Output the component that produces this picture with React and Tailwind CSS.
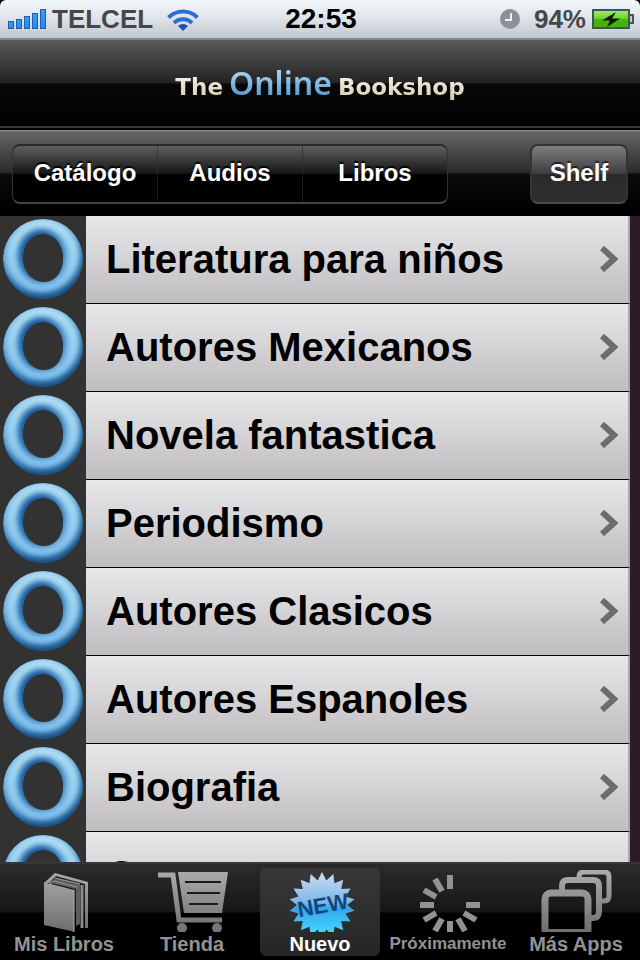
import React, { useId, useState } from 'react';

const CATEGORIES = [
    'Literatura para niños',
    'Autores Mexicanos',
    'Novela fantastica',
    'Periodismo',
    'Autores Clasicos',
    'Autores Espanoles',
    'Biografia',
    'Cuentos'
];

const SEGMENTS = ['Catálogo', 'Audios', 'Libros'];

// Starburst outline, alternating between the outer and inner radius
const burstPoints = (cx, cy, outer, inner, count) =>
    Array.from({ length: count * 2 }, (_, i) => {
        const r = i % 2 === 0 ? outer : inner;
        const a = (Math.PI * i) / count - Math.PI / 2;
        return `${(cx + r * Math.cos(a)).toFixed(1)},${(cy + r * Math.sin(a)).toFixed(1)}`;
    }).join(' ');

const SignalIcon = () => (
    <svg width="38" height="20" viewBox="0 0 38 20">
        <defs>
            <linearGradient id="signal" x1="0" y1="0" x2="0" y2="1">
                <stop offset="0" stopColor="#3f9af0" />
                <stop offset="1" stopColor="#1f8af0" />
            </linearGradient>
        </defs>
        {[7, 9, 12, 15, 19].map((h, i) => (
            <rect key={h} x={0.5 + i * 8} y={19.5 - h} width="5" height={h} fill="url(#signal)" stroke="#1b5fae" />
        ))}
    </svg>
);

const WifiIcon = () => (
    <svg width="32" height="23" viewBox="0 0 32 23" fill="none" stroke="#2a6fd6" strokeWidth="4">
        <path d="M1.500 9.500a20.500 20.500 0 0 1 29 0" />
        <path d="M7 15a12.700 12.700 0 0 1 18 0" />
        <path d="M16 23l-5-5a7 7 0 0 1 10 0z" fill="#1c50b8" stroke="none" />
    </svg>
);

const ClockIcon = () => (
    <svg width="20" height="20" viewBox="0 0 20 20">
        <circle cx="10" cy="10" r="10" fill="#8b9295" />
        <path d="M11 4v7H5" fill="none" stroke="#eef2f4" strokeWidth="2" />
    </svg>
);

const BatteryIcon = () => (
    <svg width="42" height="20" viewBox="0 0 42 20">
        <defs>
            <linearGradient id="charge" x1="0" y1="0" x2="0" y2="1">
                <stop offset="0" stopColor="#a4ec6c" />
                <stop offset="0.45" stopColor="#6fd632" />
                <stop offset="0.55" stopColor="#3fb60a" />
                <stop offset="1" stopColor="#4cab1a" />
            </linearGradient>
        </defs>
        <rect x="1" y="1" width="36" height="18" fill="url(#charge)" stroke="#3f5552" strokeWidth="2" />
        <path d="M38 6h3v8h-3" fill="#c4ccd2" stroke="#4a5459" strokeWidth="2" />
        <path d="M24 3L10 11.500h8L15 18l13-8.500h-8z" fill="#10160c" />
    </svg>
);

const RingIcon = () => {
    const id = useId();
    const ring = 'M40 0A40 40 0 1 1 40 80A40 40 0 1 1 40 0ZM40 15C28 15 20 26 20 39S29 63 41 63 60 52 60 39 52 15 40 15Z';
    return (
        <svg width="80" height="80" viewBox="0 0 80 80" aria-hidden="true">
            <defs>
                <linearGradient id={`${id}f`} x1="0" y1="0" x2="0" y2="1">
                    <stop offset="0" stopColor="#7ab6dd" />
                    <stop offset="0.5" stopColor="#6fb2e0" />
                    <stop offset="1" stopColor="#3f86c0" />
                </linearGradient>
                <linearGradient id={`${id}l`} x1="0" y1="0" x2="0" y2="1">
                    <stop offset="0" stopColor="#b4e0f6" />
                    <stop offset="1" stopColor="#86c6ef" />
                </linearGradient>
                <clipPath id={`${id}c`}><path d={ring} clipRule="evenodd" /></clipPath>
                <filter id={`${id}b`} x="-30%" y="-30%" width="160%" height="160%">
                    <feGaussianBlur stdDeviation="3" />
                </filter>
            </defs>
            <g clipPath={`url(#${id}c)`}>
                <path d={ring} fill={`url(#${id}f)`} fillRule="evenodd" />
                <ellipse cx="40" cy="37" rx="31" ry="32" fill="none" stroke={`url(#${id}l)`} strokeWidth="10" filter={`url(#${id}b)`} />
                <ellipse cx="38" cy="36" rx="22" ry="25" fill="#0f4f94" filter={`url(#${id}b)`} />
                <circle cx="38" cy="35" r="45" fill="none" stroke="#0e4378" strokeWidth="8" filter={`url(#${id}b)`} />
            </g>
        </svg>
    );
};

const TabGradient = () => (
    <svg width="0" height="0" className="absolute" aria-hidden="true">
        <defs>
            <linearGradient id="tab" gradientUnits="userSpaceOnUse" x1="0" y1="0" x2="0" y2="64">
                <stop offset="0" stopColor="#aeadae" />
                <stop offset="1" stopColor="#6c6b6c" />
            </linearGradient>
            <linearGradient id="burst" gradientUnits="userSpaceOnUse" x1="0" y1="0" x2="0" y2="64">
                <stop offset="0" stopColor="#d4dff3" />
                <stop offset="0.5" stopColor="#7db8ea" />
                <stop offset="0.6" stopColor="#35a5ec" />
                <stop offset="1" stopColor="#45d8ff" />
            </linearGradient>
        </defs>
    </svg>
);

const BookIcon = () => (
    <svg width="72" height="62" viewBox="0 0 72 62">
        <path d="M16 13L27 3l33 9v46h-3V14L28 6l-7 7z" fill="url(#tab)" />
        <path d="M27 8l25 6v40l-4 2V19L23 13z" fill="#5f5e5f" />
        <path d="M25 11l24 6M27 8l25 6" stroke="#9b9a9b" strokeWidth="1" />
        <path d="M16 12l5 2 4-4-2 4 23 6v42l-3-1-27-6z" fill="url(#tab)" />
        <path d="M46 20v42" stroke="#b5b4b5" strokeWidth="1" />
        <path d="M54 15v43" stroke="#8a898a" strokeWidth="3" />
    </svg>
);

const CartIcon = () => (
    <svg width="72" height="62" viewBox="0 0 72 62">
        <path d="M2 5h15l6 45h43" fill="none" stroke="url(#tab)" strokeWidth="5" />
        <path d="M22 2h50l-6 41H28z" fill="url(#tab)" />
        <path d="M29 12h36M31 23h33M33 34h29" stroke="#1b1a1b" strokeWidth="2" />
        <circle cx="26" cy="58" r="5" fill="#777677" />
        <circle cx="61" cy="58" r="5" fill="#777677" />
    </svg>
);

const NewIcon = () => (
    <svg width="72" height="62" viewBox="0 0 72 62">
        <polygon points={burstPoints(38, 35, 33, 25, 18)} fill="url(#burst)" />
        <text
            x="39"
            y="43"
            textAnchor="middle"
            transform="rotate(-10 38 36)"
            fill="#10467c"
            fontFamily="Liberation Sans, sans-serif"
            fontWeight="700"
            fontSize="22"
        >
            NEW
        </text>
    </svg>
);

const SpinnerIcon = () => (
    <svg width="72" height="62" viewBox="0 0 72 62">
        {/* the spokes at one and two o'clock are left out */}
        {[0, 90, 120, 150, 180, 210, 240, 270, 300, 330].map(a => (
            <rect key={a} x="35" y="5" width="6" height="14" fill="#939293" transform={`rotate(${a} 38 35)`} />
        ))}
    </svg>
);

const AppsIcon = () => (
    <svg width="72" height="62" viewBox="0 0 72 62" fill="none" stroke="url(#tab)">
        <path d="M39 9V7q0-5 5-5h20q5 0 5 5v19q0 5-5 5h-2" strokeWidth="5" />
        <path d="M22 21v-5q0-6 6-6h25q6 0 6 6v25q0 7-6 7h-2" strokeWidth="6" />
        <rect x="5" y="23" width="43" height="43" rx="6" strokeWidth="7" />
        <path d="M2 60.500h49" strokeWidth="3" />
    </svg>
);

const TABS = [
    { label: 'Mis Libros', Icon: BookIcon },
    { label: 'Tienda', Icon: CartIcon },
    { label: 'Nuevo', Icon: NewIcon },
    { label: 'Próximamente', Icon: SpinnerIcon, small: true },
    { label: 'Más Apps', Icon: AppsIcon }
];

const StatusBar = () => (
    <div className="bg-black">
        <div className="grid grid-cols-3 items-center h-10 pl-2 pr-1.5 rounded-t-md border-b-2 border-[#85898d] bg-linear-to-b from-[#f3f8fb] via-[#dde3e8] to-[#c3c6cf] font-bold text-[26px] leading-8 text-[#45484b]">
            <div className="flex items-center gap-1.5">
                <SignalIcon />
                <span>TELCEL</span>
                <span className="ml-2"><WifiIcon /></span>
            </div>
            <div className="text-center text-[28px] text-black">22:53</div>
            <div className="flex items-center justify-end gap-1.5">
                <span className="mr-2"><ClockIcon /></span>
                <span>94%</span>
                <BatteryIcon />
            </div>
        </div>
    </div>
);

const Header = () => (
    <header className="h-22 flex items-center justify-center pt-1 border-b-2 border-[#3a393b] bg-[linear-gradient(to_bottom,#5c5b5c_0%,#232223_50%,#080808_51%,#000_100%)]">
        <h1 className="flex items-baseline gap-1.5 font-[Verdana,'DejaVu_Sans',sans-serif] font-bold text-[23px] leading-10">
            <span className="bg-linear-to-b from-[#ffffff] to-[#cdc197] bg-clip-text text-transparent">The</span>
            <span className="font-['Noto_Sans',sans-serif] font-semibold text-[32px] bg-linear-to-b from-[#bfe4fa] to-[#3f8fce] bg-clip-text text-transparent">Online</span>
            <span className="bg-linear-to-b from-[#ffffff] to-[#cdc197] bg-clip-text text-transparent">Bookshop</span>
        </h1>
    </header>
);

const Toolbar = ({ segment, onSegment }) => (
    <div className="h-22 flex items-start justify-between px-3 pt-3.5 border-t-2 border-black bg-[linear-gradient(to_bottom,#8a898a_0%,#8a898a_1%,#656466_2%,#2a292b_50%,#0a0a0a_51%,#000_100%)] font-bold text-2xl text-white">
        <div className="flex w-109 h-15 rounded-lg border border-t-2 border-t-[#2b2a2b] border-x-[#343335] border-b-2 border-b-[#454446] overflow-hidden bg-[linear-gradient(to_bottom,#5f5e60_0%,#151415_50%,#000_51%)]">
            {SEGMENTS.map((label, i) => (
                <button
                    key={label}
                    type="button"
                    aria-pressed={segment === i}
                    onClick={() => onSegment(i)}
                    className={`flex-1 pb-0.5 [text-shadow:0_-2px_1px_#000] ${i > 0 ? 'border-l border-[#2c2b2d]/60' : ''}`}
                >
                    {label}
                </button>
            ))}
        </div>
        <button
            type="button"
            className="w-[98px] h-15 pb-0.5 rounded-lg border-2 border-[#343335] border-b-[#4a494b] bg-[linear-gradient(to_bottom,#7e7d7f_0%,#3d3c3e_50%,#2a292b_51%,#2e2d2f_100%)] [text-shadow:0_-2px_1px_#222]"
        >
            Shelf
        </button>
    </div>
);

const CategoryRow = ({ name }) => (
    <li>
        <a href="#" className="flex h-22 bg-[#323232]">
            <span className="w-[86px] shrink-0 pl-[3px] pt-[3px]">
                <RingIcon />
            </span>
            <span className="flex flex-1 items-center justify-between pl-5 pr-2.5 pb-0.5 border-b border-b-black border-r-2 border-r-[#a9a7ac] bg-linear-to-b from-[#e8e7e9] to-[#bfbdc0] text-[40px] font-bold text-black">
                {name}
                <svg width="18" height="26" viewBox="0 0 18 26" aria-hidden="true">
                    <path d="M2 2l12 11L2 24" fill="none" stroke="#6c6b6d" strokeWidth="6" />
                </svg>
            </span>
        </a>
    </li>
);

const TabBar = ({ active, onSelect }) => (
    <nav className="grid grid-cols-5 h-[98px] pt-1 pb-1 border-t-2 border-[#363537] bg-[linear-gradient(to_bottom,#2c2b2c_0%,#171617_50%,#000_51%)]">
        {TABS.map(({ label, Icon, small }, i) => (
            <button
                key={label}
                type="button"
                onClick={() => onSelect(i)}
                className={`flex flex-col items-center mx-1 pt-0.5 rounded-md font-bold ${active === i ? 'bg-linear-to-b from-[#393839] to-[#262526] text-white' : 'text-[#939293]'}`}
            >
                <Icon />
                <span className={`whitespace-nowrap ${small ? 'text-[17px]' : 'text-[20px]'} leading-6`}>{label}</span>
            </button>
        ))}
    </nav>
);

const App = () => {
    const [segment, setSegment] = useState(0);
    const [tab, setTab] = useState(2);

    return (
        <div className="flex flex-col h-screen overflow-hidden bg-black font-['Liberation_Sans',sans-serif]">
            <TabGradient />
            <StatusBar />
            <Header />
            <Toolbar segment={segment} onSegment={setSegment} />
            <main className="flex-1 min-h-0 overflow-y-auto [scrollbar-width:none] pr-2.5 bg-linear-to-r from-[#1c1219] to-[#2c1c2a]">
                <ul>
                    {CATEGORIES.map(name => <CategoryRow key={name} name={name} />)}
                </ul>
            </main>
            <TabBar active={tab} onSelect={setTab} />
        </div>
    );
};

export default App;
